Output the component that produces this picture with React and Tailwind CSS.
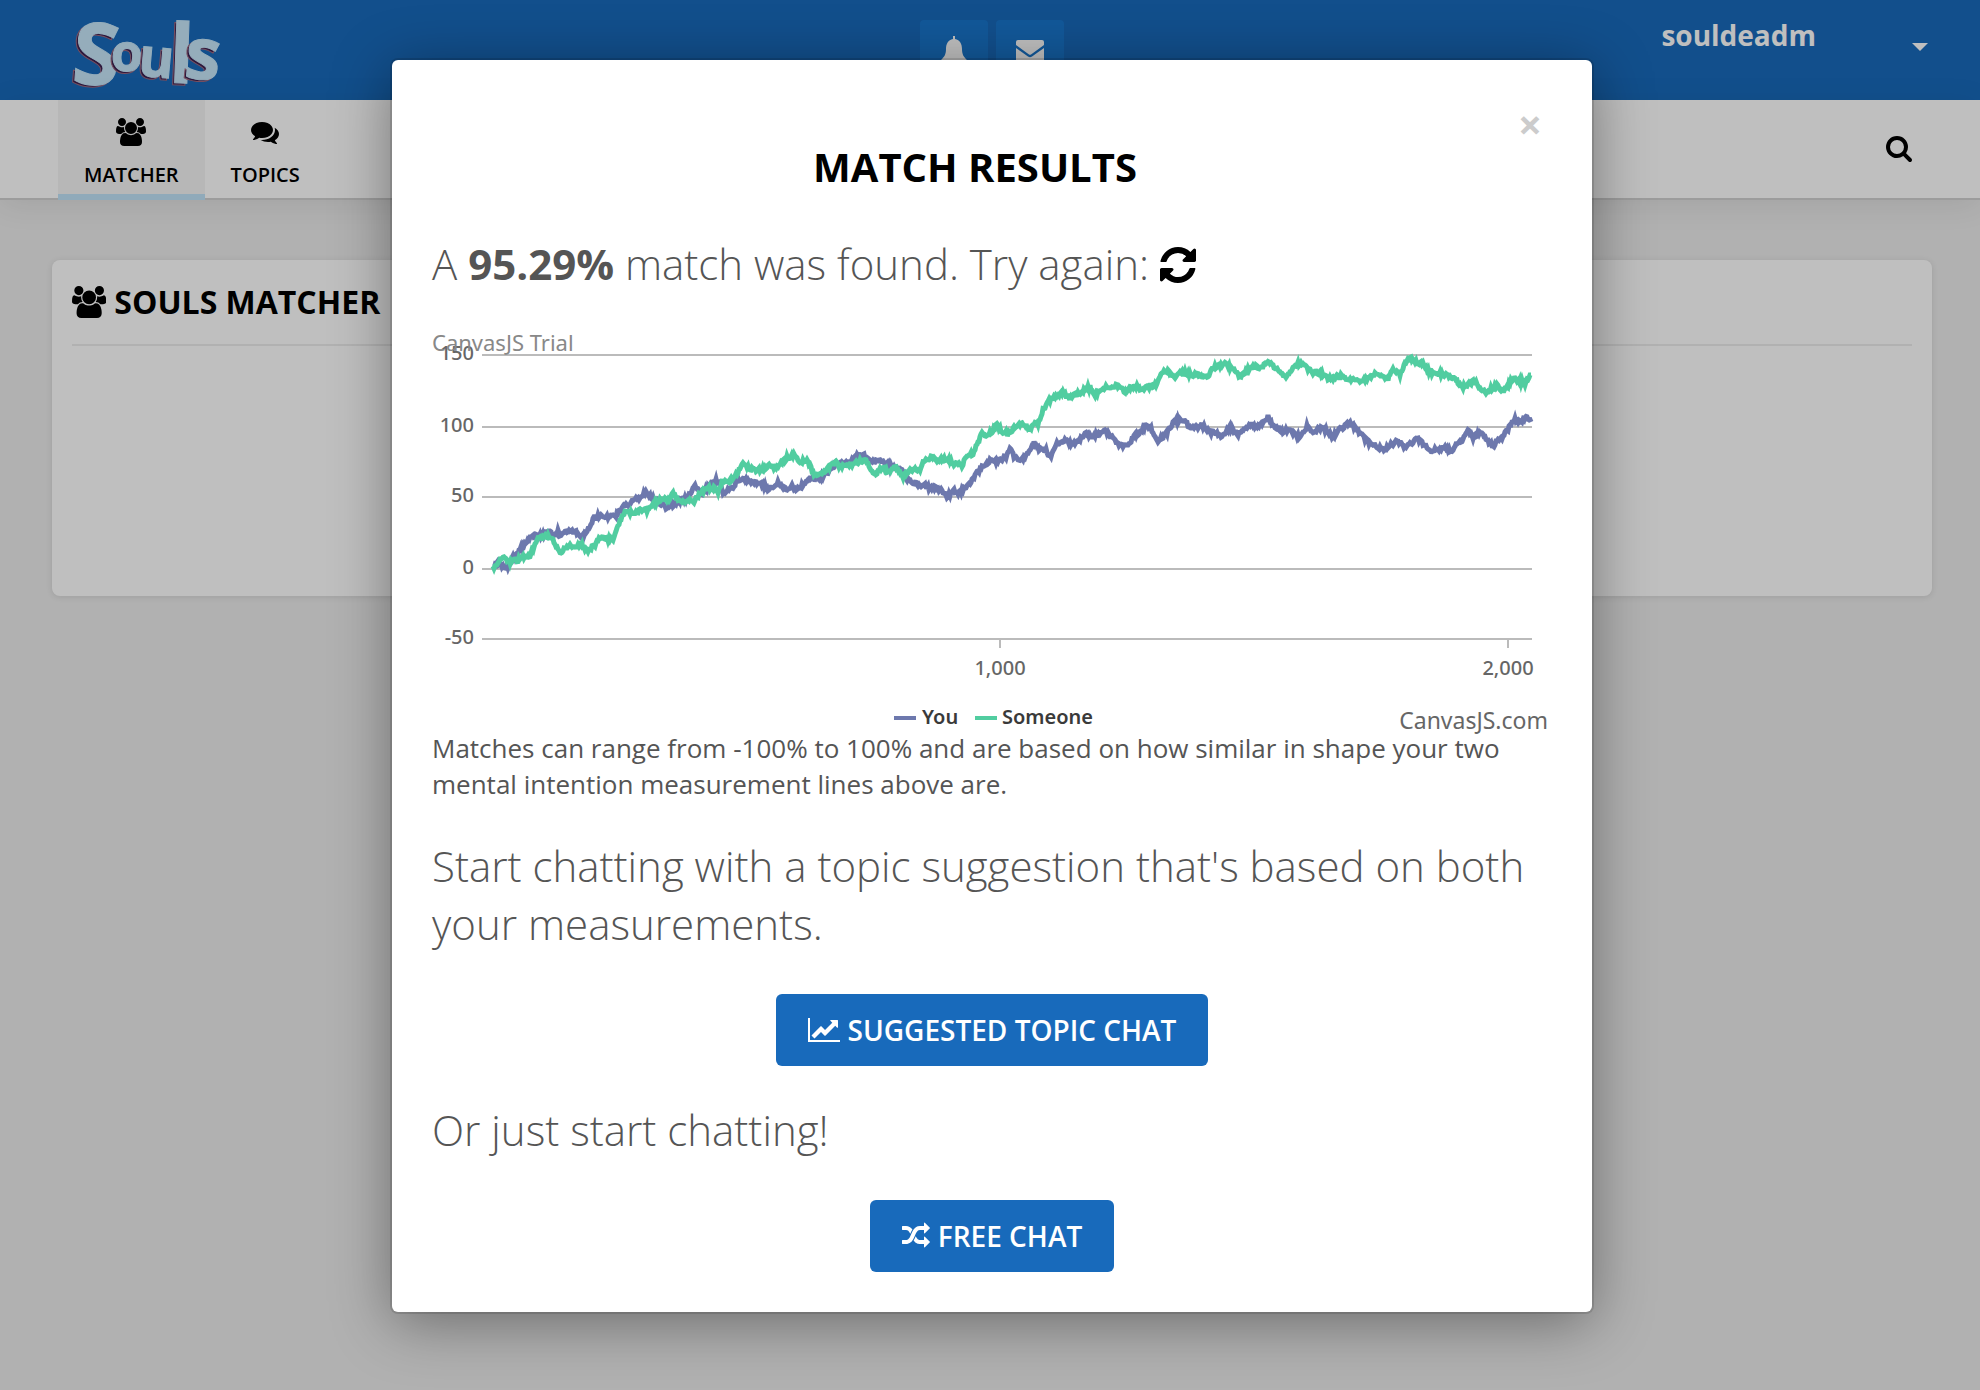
const ICONS = {
  users: {
    box: '0 0 1920 1792',
    d: 'M593 896q-162 5-265 128h-134q-82 0-138-40.5t-56-118.5q0-353 124-353 6 0 43.5 21t97.5 42.5 119 21.5q67 0 133-23-5 37-5 66 0 139 81 256zm1071 637q0 120-73 189.5t-194 69.5h-874q-121 0-194-69.5t-73-189.5q0-53 3.5-103.5t14-109 26.5-108.5 43-97.5 62-81 85.5-53.5 111.5-20q10 0 43 21.5t73 48 107 48 135 21.5 135-21.5 107-48 73-48 43-21.5q61 0 111.5 20t85.5 53.5 62 81 43 97.5 26.5 108.5 14 109 3.5 103.5zm-1024-1277q0 106-75 181t-181 75-181-75-75-181 75-181 181-75 181 75 75 181zm704 384q0 159-112.5 271.5t-271.5 112.5-271.5-112.5-112.5-271.5 112.5-271.5 271.5-112.5 271.5 112.5 112.5 271.5zm576 225q0 78-56 118.5t-138 40.5h-134q-103-123-265-128 81-117 81-256 0-29-5-66 66 23 133 23 59 0 119-21.5t97.5-42.5 43.5-21q124 0 124 353zm-128-609q0 106-75 181t-181 75-181-75-75-181 75-181 181-75 181 75 75 181z',
  },
  comments: {
    box: '0 0 1792 1792',
    d: 'M1408 768q0 139-94 257t-256.5 186.5-353.5 68.5q-86 0-176-16-124 88-278 128-36 9-86 16h-3q-11 0-20.5-8t-11.5-21q-1-3-1-6.5t.5-6.5 2-6l2.5-5t3.5-5.5 4-5 4.5-5 4-4.5q5-6 23-25t26-29.5 22.5-29 25-38.5 20.5-44q-124-72-195-177t-71-224q0-139 94-257t256.5-186.5 353.5-68.5 353.5 68.5 256.5 186.5 94 257zm384 256q0 120-71 224.5t-195 176.5q10 24 20.5 44t25 38.5 22.5 29 26 29.5 23 25q1 1 4 4.5t4.5 5 4 5 3.5 5.5l2.5 5t2 6 .5 6.5-1 6.5q-3 14-13 22t-22 7q-50-7-86-16-154-40-278-128-90 16-176 16-271 0-472-132 58 4 88 4 161 0 309-45t264-129q125-92 192-212t67-254q0-77-23-152 129 71 204 178t75 230z',
  },
  search: {
    box: '0 0 1792 1792',
    d: 'M1216 832q0-185-131.5-316.5t-316.5-131.5-316.5 131.5-131.5 316.5 131.5 316.5 316.5 131.5 316.5-131.5 131.5-316.5zm512 832q0 52-38 90t-90 38q-54 0-90-38l-343-342q-179 124-399 124-143 0-273.5-55.5t-225-150-150-225-55.5-273.5 55.5-273.5 150-225 225-150 273.5-55.5 273.5 55.5 225 150 150 225 55.5 273.5q0 220-124 399l343 343q37 37 37 90z',
  },
  refresh: {
    box: '128 0 1536 1792',
    d: 'M1639 1056q0 5-1 7-64 268-268 434.5t-478 166.5q-146 0-282.5-55t-243.5-157l-129 129q-19 19-45 19t-45-19-19-45v-448q0-26 19-45t45-19h448q26 0 45 19t19 45-19 45l-137 137q71 66 161 102t187 36q134 0 250-65t186-179q11-17 53-117 8-23 30-23h192q13 0 22.5 9.5t9.5 22.5zm25-800v448q0 26-19 45t-45 19h-448q-26 0-45-19t-19-45 19-45l138-138q-148-137-349-137-134 0-250 65t-186 179q-11 17-53 117-8 23-30 23h-199q-13 0-22.5-9.5t-9.5-22.5v-7q65-268 270-434.5t480-166.5q146 0 284 55.5t245 156.5l130-129q19-19 45-19t45 19 19 45z',
  },
  lineChart: {
    box: '0 0 2048 1792',
    d: 'M2048 1536v128h-2048v-1536h128v1408h1920zm-128-1248v435q0 21-19.5 29.5t-35.5-7.5l-121-121-633 633q-10 10-23 10t-23-10l-233-233-416 416-192-192 585-585q10-10 23-10t23 10l233 233 464-464-121-121q-16-16-7.5-35.5t29.5-19.5h435q14 0 23 9t9 23z',
  },
  random: {
    box: '0 0 1792 1792',
    d: 'M666 481q-60 92-137 273-22-45-37-72.5t-40.5-63.5-51-56.5-63-35-81.5-14.5h-224q-14 0-23-9t-9-23v-192q0-14 9-23t23-9h224q250 0 410 225zm1126 799q0 14-9 23l-320 320q-9 9-23 9-13 0-22.5-9.5t-9.5-22.5v-192q-32 0-85 .5t-81 1-73-1-71-5-64-10.5-63-18.5-58-28.5-59-40-55-53.5-56-69.5q59-93 136-273 22 45 37 72.5t40.5 63.5 51 56.5 63 35 81.5 14.5h256v-192q0-14 9-23t23-9q12 0 24 10l319 319q9 9 9 23zm0-896q0 14-9 23l-320 320q-9 9-23 9-13 0-22.5-9.5t-9.5-22.5v-192h-256q-48 0-87 15t-69 45-51 61.5-45 77.5q-32 62-78 171-29 66-49.5 111t-54 105-64 100-74 83-90 68.5-106.5 42-128 16.5h-224q-14 0-23-9t-9-23v-192q0-14 9-23t23-9h224q48 0 87-15t69-45 51-61.5 45-77.5q32-62 78-171 29-66 49.5-111t54-105 64-100 74-83 90-68.5 106.5-42 128-16.5h256v-192q0-14 9-23t23-9q12 0 24 10l319 319q9 9 9 23z',
  },
  bell: {
    box: '0 0 28 32',
    d: 'M13 0h2v3c5 1 7 5 7 10 0 6 2 8 5 11v2H1v-2c3-3 5-5 5-11 0-5 2-9 7-10zM11 28h6a3 3 0 0 1-6 0z',
  },
  envelope: {
    box: '0 0 28 24',
    d: 'M2 0h24a2 2 0 0 1 2 2v3L15 14.500q-1 .6-2 0L0 5V2a2 2 0 0 1 2-2zM0 8l12 8.600q2 1.200 4 0L28 8v14a2 2 0 0 1-2 2H2a2 2 0 0 1-2-2z',
  },
}

function Icon({ name, className }) {
  const { box, d } = ICONS[name]
  return (
    <svg viewBox={box} className={className} fill="currentColor" aria-hidden="true">
      <path d={d} />
    </svg>
  )
}

// chart space is 1120x400: value 0 sits at y=239, x=0 sits at x=61
const YOU = '61,235 66,234 76,237 81,227 85,225 90,217 98,208 105,206 113,205 116,200 120,205 126,202 128,204 138,200 145,203 151,207 156,200 161,189 168,186 175,187 183,187 188,180 194,174 198,175 203,168 208,168 214,162 220,168 226,172 230,174 234,179 241,175 250,169 255,168 259,162 263,157 270,163 278,155 284,151 288,153 291,163 301,157 306,149 315,151 321,152 330,154 336,159 346,153 353,159 360,156 365,160 373,153 381,148 388,148 396,142 403,135 413,131 418,132 424,127 429,123 435,128 443,132 450,131 458,137 470,138 474,148 481,152 488,157 493,154 498,159 503,157 513,163 515,168 521,160 526,163 535,157 541,148 550,137 558,131 565,131 574,127 578,118 581,125 587,132 593,127 598,120 602,113 608,120 613,119 618,127 625,114 633,110 640,114 646,112 653,103 661,107 671,100 678,105 685,113 695,117 701,107 708,103 714,95 719,98 726,111 735,103 741,92 750,89 760,99 770,95 778,102 791,106 798,97 806,105 818,96 830,95 836,87 843,98 851,102 856,100 868,107 875,97 881,102 890,97 901,107 908,99 918,93 928,103 938,114 951,120 965,111 973,117 986,109 1000,121 1013,117 1021,122 1025,113 1031,109 1036,100 1041,107 1048,103 1061,116 1071,106 1083,90 1090,92 1095,87 1099,92'
const SOMEONE = '61,238 66,232 72,228 78,232 85,230 91,227 98,225 102,218 106,208 111,208 116,205 121,210 128,223 133,217 145,215 150,215 155,221 163,215 170,206 175,209 181,210 186,195 193,182 203,183 210,180 216,180 221,175 231,168 236,171 241,164 250,173 256,170 261,173 268,163 275,158 281,158 286,161 291,150 296,151 303,147 310,133 321,140 331,139 338,135 343,139 351,132 356,127 362,125 368,132 375,131 383,145 391,142 403,132 408,137 418,135 433,130 443,145 450,138 458,142 464,137 471,147 478,140 488,140 492,130 500,127 506,131 515,128 521,134 530,135 535,127 541,123 550,103 555,107 565,95 571,103 578,102 585,95 591,93 598,100 603,92 606,93 611,80 617,70 631,63 638,68 658,57 663,65 673,57 680,58 685,55 693,62 703,56 710,59 725,54 730,43 736,41 743,47 748,42 763,45 776,46 781,38 793,33 800,39 808,46 821,35 826,38 836,33 845,38 853,48 863,35 870,33 881,43 890,43 896,49 908,46 918,49 928,52 945,43 956,49 961,40 968,45 973,33 978,27 985,33 991,34 998,42 1011,44 1021,47 1031,57 1042,51 1053,63 1065,55 1071,62 1081,49 1093,53 1099,45'

// fills the gaps between the sampled points with a small repeatable jitter
function toNoisyLine(samples, seed) {
  const pts = samples.split(' ').map((p) => p.split(',').map(Number))
  const out = []
  let s = seed
  for (let i = 0; i < pts.length - 1; i++) {
    const [x0, y0] = pts[i]
    const [x1, y1] = pts[i + 1]
    for (let x = x0; x < x1; x++) {
      s = (s * 16807) % 2147483647
      const jitter = (s / 2147483647 - 0.5) * 4
      out.push(`${x},${(y0 + ((y1 - y0) * (x - x0)) / (x1 - x0) + jitter).toFixed(1)}`)
    }
  }
  out.push(pts[pts.length - 1].join(','))
  return out.join(' ')
}

const Y_TICKS = [
  { label: '150', y: 25 },
  { label: '100', y: 97 },
  { label: '50', y: 167 },
  { label: '0', y: 239 },
  { label: '-50', y: 309 },
]

const X_TICKS = [
  { label: '1,000', x: 568 },
  { label: '2,000', x: 1076 },
]

function MatchChart() {
  return (
    <svg viewBox="0 0 1120 400" className="block w-full h-auto overflow-visible font-['Noto_Sans',sans-serif]" role="img" aria-label="Match chart">
      {Y_TICKS.map((t) => (
        <g key={t.label}>
          <rect x="50" y={t.y - 1} width="1050" height="2" fill="#bbbbbb" />
          <text x="42" y={t.y + 5} textAnchor="end" fontSize="20" fontWeight="500" fill="#666666">{t.label}</text>
        </g>
      ))}
      {X_TICKS.map((t) => (
        <g key={t.label}>
          <rect x={t.x - 1} y="310" width="2" height="8" fill="#bbbbbb" />
          <text x={t.x} y="345" textAnchor="middle" fontSize="20" fontWeight="500" fill="#666666">{t.label}</text>
        </g>
      ))}
      <polyline points={toNoisyLine(YOU, 77)} fill="none" stroke="#6d78ad" strokeWidth="5" />
      <polyline points={toNoisyLine(SOMEONE, 501)} fill="none" stroke="#51cda0" strokeWidth="5" />

      <rect x="462" y="386" width="22" height="4" fill="#6d78ad" />
      <text x="490" y="394" fontSize="20" fontWeight="600" fill="#3a3a3a">You</text>
      <rect x="543" y="386" width="22" height="4" fill="#51cda0" />
      <text x="570" y="394" fontSize="20" fontWeight="600" fill="#3a3a3a">Someone</text>

      <text x="0" y="21" fontSize="22" fill="#888888">CanvasJS Trial</text>
      <text x="1116" y="399" textAnchor="end" fontSize="23" fill="#666666">CanvasJS.com</text>
    </svg>
  )
}

const LOGO_LETTERS = [
  { ch: 'S', x: 2, y: 74, size: 86, tilt: 4 },
  { ch: 'o', x: 41, y: 61, size: 52, tilt: 2 },
  { ch: 'u', x: 69, y: 67, size: 54, tilt: 5 },
  { ch: 'l', x: 99, y: 73, size: 82, tilt: 2 },
  { ch: 's', x: 115, y: 69, size: 72, tilt: 6 },
]

function Logo() {
  return (
    <a href="#" aria-label="Souls" className="block">
      <svg viewBox="0 0 156 80" className="w-[156px] h-20 overflow-visible font-['Liberation_Sans_Narrow','Open_Sans',sans-serif]">
        {LOGO_LETTERS.map((l, i) => (
          <g key={i} transform={`rotate(${l.tilt} ${l.x + 15} ${l.y - 20})`} fontSize={l.size} fontWeight="700">
            <text x={l.x - 2} y={l.y + 2} fill="#3d2050" stroke="#a06a80" strokeWidth="1">{l.ch}</text>
            <text x={l.x} y={l.y} fill="#c7e7fa" stroke="#c7e7fa" strokeWidth="1">{l.ch}</text>
          </g>
        ))}
      </svg>
    </a>
  )
}

function Header() {
  return (
    <header className="h-25 bg-[#186abb] text-white grid grid-cols-3 items-start">
      <div className="pl-[70px] pt-[10px]">
        <Logo />
      </div>
      <div className="flex justify-center gap-2 pt-5 pl-1">
        <button aria-label="Notifications" className="w-17 h-15 rounded bg-[#1976cd] flex justify-center pt-4">
          <Icon name="bell" className="w-7 h-8" />
        </button>
        <button aria-label="Messages" className="w-17 h-15 rounded bg-[#1976cd] flex justify-center pt-5">
          <Icon name="envelope" className="w-7 h-6" />
        </button>
      </div>
      <button className="justify-self-end flex items-center gap-24 pr-[52px] pt-4">
        <span className="text-[28px] leading-[38px] font-bold">souldeadm</span>
        <span className="mt-6 border-x-8 border-t-8 border-x-transparent border-t-white" />
      </button>
    </header>
  )
}

function Nav() {
  return (
    <nav className="h-25 bg-white border-b-2 border-[#d0d0d0] shadow-[0_4px_30px_rgba(0,0,0,0.08)] relative flex items-start justify-between pl-[58px] pr-[67px] text-black">
      <div className="flex text-xl leading-6 font-semibold">
        <a href="#" className="h-25 px-[26px] pt-[18px] bg-[#f4f4f4] border-b-6 border-[#c1e3f9] flex flex-col items-center gap-[17px]">
          <Icon name="users" className="h-7" />
          MATCHER
        </a>
        <a href="#" className="h-25 px-[26px] pt-[18px] flex flex-col items-center gap-[17px]">
          <Icon name="comments" className="h-7" />
          TOPICS
        </a>
      </div>
      <button aria-label="Search" className="mt-[34px]">
        <Icon name="search" className="h-7" />
      </button>
    </nav>
  )
}

function MatcherCard() {
  return (
    <section className="mt-15 ml-13 mr-12 h-84 px-5 bg-white rounded-lg shadow-[0_1px_6px_rgba(0,0,0,0.1)]">
      <h2 className="h-[86px] border-b-2 border-[#ececec] flex items-center gap-2 text-[32px] font-bold text-black">
        <Icon name="users" className="h-8" />
        SOULS MATCHER
      </h2>
    </section>
  )
}

function ActionButton({ icon, children }) {
  return (
    <button className="mx-auto mt-[41px] h-18 px-8 pb-px rounded-md bg-[#186abb] text-white text-[28px] font-semibold flex items-center gap-2">
      <Icon name={icon} className="h-7" />
      {children}
    </button>
  )
}

function MatchModal() {
  return (
    <div className="absolute inset-0 bg-black/25 pl-1 pt-15 pb-19">
      <div
        role="dialog"
        aria-modal="true"
        aria-labelledby="match-title"
        className="mx-auto max-w-[1200px] bg-white rounded-md p-10 text-[#555555] shadow-[0_0_0_2px_rgba(0,0,0,0.12),0_10px_60px_rgba(0,0,0,0.4)]"
      >
        <div className="flex items-start">
          <h1 id="match-title" className="grow mt-[43px] text-center text-[40px] leading-12 font-bold text-black">MATCH RESULTS</h1>
          <button aria-label="Close" className="pr-[10px] text-[42px] leading-12 font-bold text-[#cccccc]">×</button>
        </div>

        <p className="mt-11 text-[42px] leading-[58px] font-light">
          A <strong className="font-bold">95.29%</strong> match was found. Try again:{' '}
          <button aria-label="Try again" className="inline-block align-[-6px] leading-none text-black">
            <Icon name="refresh" className="block h-[42px]" />
          </button>
        </p>

        <div className="mt-[37px]">
          <MatchChart />
        </div>

        <p className="text-[26px] leading-9">
          Matches can range from -100% to 100% and are based on how similar in shape your two mental intention measurement lines above are.
        </p>

        <p className="mt-[35px] text-[42px] leading-[58px] font-light">
          Start chatting with a topic suggestion that's based on both your measurements.
        </p>
        <ActionButton icon="lineChart">SUGGESTED TOPIC CHAT</ActionButton>

        <p className="mt-[35px] text-[42px] leading-[58px] font-light">Or just start chatting!</p>
        <ActionButton icon="random">FREE CHAT</ActionButton>
      </div>
    </div>
  )
}

export default function App() {
  return (
    <div className="relative min-h-screen bg-[#ececec] font-['Open_Sans',sans-serif]">
      <Header />
      <Nav />
      <MatcherCard />
      <MatchModal />
    </div>
  )
}
